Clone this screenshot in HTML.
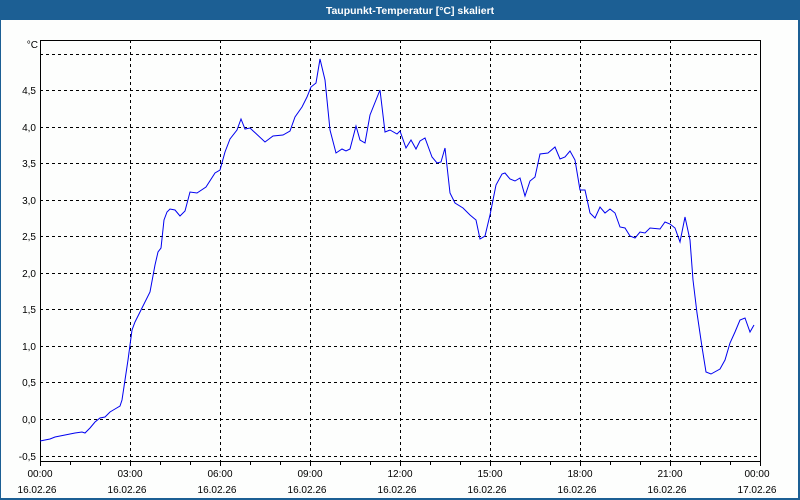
<!DOCTYPE html>
<html><head><meta charset="utf-8"><style>
html,body{margin:0;padding:0;width:800px;height:500px;overflow:hidden;background:#fdfefd}
</style></head><body>
<svg width="800" height="500" xmlns="http://www.w3.org/2000/svg" style="display:block">
<rect x="0" y="0" width="800" height="500" fill="#1c5f94"/>
<rect x="1" y="20" width="797" height="478" fill="#fdfefd"/>
<text x="410" y="14" fill="#fff" font-family="Liberation Sans, sans-serif" font-size="10.5" font-weight="bold" text-anchor="middle">Taupunkt-Temperatur [°C] skaliert</text>
<g stroke="#000" stroke-width="1" stroke-dasharray="3,3" shape-rendering="crispEdges">
<line x1="40" x2="760" y1="54.5" y2="54.5"/><line x1="40" x2="760" y1="90.5" y2="90.5"/>
<line x1="40" x2="760" y1="127.5" y2="127.5"/><line x1="40" x2="760" y1="163.5" y2="163.5"/>
<line x1="40" x2="760" y1="200.5" y2="200.5"/><line x1="40" x2="760" y1="236.5" y2="236.5"/>
<line x1="40" x2="760" y1="273.5" y2="273.5"/><line x1="40" x2="760" y1="309.5" y2="309.5"/>
<line x1="40" x2="760" y1="346.5" y2="346.5"/><line x1="40" x2="760" y1="382.5" y2="382.5"/>
<line x1="40" x2="760" y1="419.5" y2="419.5"/><line x1="40" x2="760" y1="456.5" y2="456.5"/>
<line y1="40" y2="461" x1="130.5" x2="130.5"/><line y1="40" y2="461" x1="220.5" x2="220.5"/>
<line y1="40" y2="461" x1="310.5" x2="310.5"/><line y1="40" y2="461" x1="400.5" x2="400.5"/>
<line y1="40" y2="461" x1="490.5" x2="490.5"/><line y1="40" y2="461" x1="580.5" x2="580.5"/>
<line y1="40" y2="461" x1="670.5" x2="670.5"/>
</g>
<g stroke="#000" stroke-width="1" shape-rendering="crispEdges" fill="none">
<rect x="40.5" y="40.5" width="720" height="421"/>
<path d="M40.5 461v5M70.5 461v4M100.5 461v4M130.5 461v5M160.5 461v4M190.5 461v4M220.5 461v5M250.5 461v4M280.5 461v4M310.5 461v5M340.5 461v4M370.5 461v4M400.5 461v5M430.5 461v4M460.5 461v4M490.5 461v5M520.5 461v4M550.5 461v4M580.5 461v5M610.5 461v4M640.5 461v4M670.5 461v5M700.5 461v4M730.5 461v4M760.5 461v5"/>
</g>
<polyline fill="none" stroke="#0000f0" stroke-width="1" points="40,441 50,439 55,437 65,435 75,433 82,432 85,433 90,428 95,422 100,418 105,417 110,412 115,409 120,406 122,400 125,380 128,360 132,330 135,322 140,312 150,292 155,265 158,252 161,248 164,220 167,212 170,209 175,210 180,216 185,211 190,192 197,193 206,187 215,173 220,170 225,152 230,139 237,130 241,119 245,129 250,128 265,142 273,136 283,135 290,131 295,117 302,107 307,97 311,87 316,83 320,59 325,80 330,130 336,153 342,149 346,151 350,149 356,126 360,140 365,143 370,115 380,90 385,132 390,130 397,134 400,131 406,148 411,140 416,149 420,141 425,138 432,157 437,163 441,162 445,148 450,193 455,203 463,208 470,215 476,220 480,239 485,236 490,215 496,185 502,174 505,173 510,179 515,181 520,178 525,196 530,181 535,177 540,154 548,153 555,147 560,159 565,157 570,151 575,160 580,190 585,190 590,213 595,218 600,207 605,213 610,209 615,213 620,227 625,228 630,236 635,238 640,232 645,233 650,228 660,229 665,222 670,224 675,228 680,242 685,217 690,240 693,280 697,313 702,347 706,372 711,374 720,369 725,360 730,343 735,332 740,320 745,318 750,332 754,325"/>
<g font-family="Liberation Sans, sans-serif" font-size="10" fill="#000" text-anchor="end">
<text x="38" y="48">°C</text>
<text x="36" y="94">4,5</text><text x="36" y="131">4,0</text><text x="36" y="167">3,5</text>
<text x="36" y="204">3,0</text><text x="36" y="240">2,5</text><text x="36" y="277">2,0</text>
<text x="36" y="313">1,5</text><text x="36" y="350">1,0</text><text x="36" y="386">0,5</text>
<text x="36" y="423">0,0</text><text x="36" y="460">-0,5</text>
</g>
<g font-family="Liberation Sans, sans-serif" font-size="10" fill="#000" text-anchor="middle">
<text x="40" y="477">00:00</text><text x="130" y="477">03:00</text><text x="220" y="477">06:00</text>
<text x="310" y="477">09:00</text><text x="400" y="477">12:00</text><text x="490" y="477">15:00</text>
<text x="580" y="477">18:00</text><text x="670" y="477">21:00</text><text x="757" y="477">00:00</text>
<text x="37" y="493">16.02.26</text><text x="127" y="493">16.02.26</text><text x="217" y="493">16.02.26</text>
<text x="307" y="493">16.02.26</text><text x="397" y="493">16.02.26</text><text x="487" y="493">16.02.26</text>
<text x="577" y="493">16.02.26</text><text x="667" y="493">16.02.26</text><text x="757" y="493">17.02.26</text>
</g>
</svg>
</body></html>
